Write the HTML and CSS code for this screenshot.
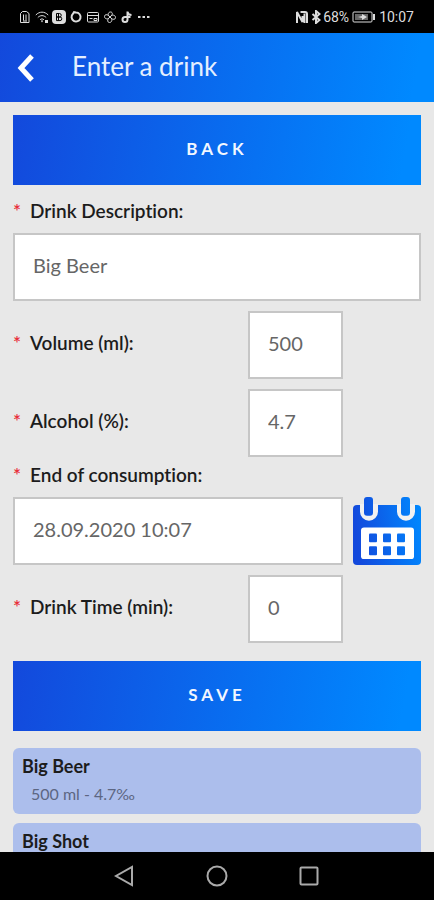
FILE: index.html
```html
<!DOCTYPE html>
<html lang="en">
<head>
<meta charset="utf-8">
<meta name="viewport" content="width=device-width, initial-scale=1">
<title>Enter a drink</title>
<link rel="stylesheet" href="styles.css">
</head>
<body>
<div class="status">
  <div class="status-group">
    <svg class="glyph" viewBox="0 0 14 14"><path d="M2.500 12.500V3.500L4.500 1.500h4l2.500 2v9zM5.500 4.500v6M8 4.500v6M5 11h4"/></svg>
    <svg class="glyph" viewBox="0 0 14 14"><path d="M.8 5C4.500 1.200 9.500 1.200 13.200 5M2.800 7.500c2.500-2.500 5.900-2.500 8.400 0M5 9.800c1.200-1.200 2.800-1.200 4 0"/><path class="solid" d="M6 11l1-1 1 1-1 1.500zM10 10h3v3h-3z"/></svg>
    <svg class="glyph" viewBox="0 0 14 14"><rect class="solid" width="14" height="14" rx="4"/><path class="dark" d="M4.500 3.500h3a1.700 1.700 0 0 1 0 3.500h-3zM4.500 7h3.500a1.800 1.800 0 0 1 0 3.600H4.500zM6.500 3.500v7"/></svg>
    <svg class="glyph" viewBox="0 0 14 14"><path class="thick" d="M7 2.500a4.500 4.500 0 1 1-3 1.200L5 2.200z"/></svg>
    <svg class="glyph" viewBox="0 0 14 14"><rect x="1.500" y="2.500" width="11" height="9.500" rx="1"/><path d="M2 5.500h10M8 8.500h3v2H8zM3.500 8.500h3"/></svg>
    <svg class="glyph" viewBox="0 0 14 14"><path d="M7 7C4 5.500 5 2 7.500 2S10 5 7 7c2-3 5.500-2 5.500.5S9 10 7 7c3 2 2 5.500-.5 5.500S4 9 7 7c-2 3-5.500 2-5.500-.5S5 4 7 7z"/></svg>
    <svg class="glyph" viewBox="0 0 14 14"><path class="thick" d="M7.500 1.500v8a2.500 2.500 0 1 1-2.500-2.500h5.500M7.500 2c.5 2 2 3 4 3"/></svg>
    <svg class="glyph" viewBox="0 0 14 14"><path class="solid" d="M1 6h2.500v2H1zM5.500 6H8v2H5.500zM10 6h2.500v2H10z"/></svg>
  </div>
  <div class="status-group right">
    <svg class="glyph" viewBox="0 0 14 14"><path class="bold" d="M2 13V2l5.500 10V6M5.500 2H10a2 2 0 0 1 2 2v9M9.500 3.500V13"/></svg>
    <svg class="bluetooth" viewBox="0 0 10 14"><path d="M1.500 4l7 6L5 13V1l3.500 3-7 6"/></svg>
    <span>68%</span>
    <svg class="battery" viewBox="0 0 24 12"><rect x="1" y="1" width="19" height="10" rx="1"/><rect class="charge" x="3" y="3" width="13" height="6"/><path class="solid" d="M6 6l4-1V3l5 3-5 3V7zM21 3h2v6h-2z"/></svg>
    <span>10:07</span>
  </div>
</div>
<header class="header">
  <button class="back-arrow" type="button" aria-label="Back"><svg viewBox="0 0 18 28"><path d="M15 2L4 14l11 12"/></svg></button>
  <h1>Enter a drink</h1>
</header>
<main class="content">
  <button class="action" type="button">BACK</button>
  <form class="form">
    <label class="wide" for="description"><span class="star">*</span>Drink Description:</label>
    <input class="wide" id="description" type="text" value="Big Beer">
    <label for="volume"><span class="star">*</span>Volume (ml):</label>
    <input class="short" id="volume" type="text" value="500">
    <label for="alcohol"><span class="star">*</span>Alcohol (%):</label>
    <input class="short" id="alcohol" type="text" value="4.7">
    <label class="wide" for="end"><span class="star">*</span>End of consumption:</label>
    <input class="date" id="end" type="text" value="28.09.2020 10:07">
    <button class="calendar" type="button" aria-label="Pick a date">
      <svg viewBox="0 0 68 69" preserveAspectRatio="none">
        <defs><linearGradient id="blue" gradientUnits="userSpaceOnUse" x1="0" y1="20" x2="68" y2="10"><stop offset="0" stop-color="#1349dc"/><stop offset="1" stop-color="#0089ff"/></linearGradient></defs>
        <rect fill="url(#blue)" x="0" y="8" width="68" height="61" rx="4"/>
        <path fill="#f1f1f1" d="M7 7h18v8a9 9 0 0 1-18 0zM44 7h18v8a9 9 0 0 1-18 0z"/>
        <rect fill="url(#blue)" x="11" y="0" width="9" height="19" rx="3"/>
        <rect fill="url(#blue)" x="48" y="0" width="9" height="19" rx="3"/>
        <rect fill="#fff" x="8" y="31" width="53" height="32" rx="3"/>
        <g fill="url(#blue)"><rect x="16" y="37" width="8" height="9" rx="1"/><rect x="30" y="37" width="8" height="9" rx="1"/><rect x="44" y="37" width="8" height="9" rx="1"/><rect x="16" y="50" width="8" height="9" rx="1"/><rect x="30" y="50" width="8" height="9" rx="1"/><rect x="44" y="50" width="8" height="9" rx="1"/></g>
      </svg>
    </button>
    <label for="time"><span class="star">*</span>Drink Time (min):</label>
    <input class="short" id="time" type="text" value="0">
  </form>
  <button class="action" type="button">SAVE</button>
  <ul class="drinks">
    <li><h2>Big Beer</h2><p>500 ml - 4.7‰</p></li>
    <li><h2>Big Shot</h2></li>
  </ul>
</main>
<nav class="nav">
  <button type="button" aria-label="Back"><svg viewBox="0 0 22 22"><path d="M18 2v18L2 11z"/></svg></button>
  <button type="button" aria-label="Home"><svg viewBox="0 0 22 22"><circle cx="11" cy="11" r="9.500"/></svg></button>
  <button type="button" aria-label="Recent apps"><svg viewBox="0 0 22 22"><rect x="2.500" y="2.500" width="17" height="17" rx="1"/></svg></button>
</nav>
</body>
</html>
```
FILE: styles.css
```css
* {
  box-sizing: border-box;
}

body {
  margin: 0;
  height: 100vh;
  display: flex;
  flex-direction: column;
  background: #e8e8e8;
  color: #1c1c1c;
  font-family: Lato, sans-serif;
  font-variant-ligatures: none;
}

button {
  border: 0;
  padding: 0;
  background: none;
  font-family: inherit;
}

svg {
  display: block;
  fill: none;
}

.status {
  flex: none;
  height: 33px;
  padding: 0 20px 0 18px;
  display: flex;
  align-items: center;
  justify-content: space-between;
  background: #000;
  color: #ddd;
  font: 14px Roboto, sans-serif;
}

.status-group {
  display: flex;
  align-items: center;
  gap: 3px;
}

.right {
  gap: 2px;
}

.status svg {
  stroke: #ddd;
}

.glyph {
  width: 14px;
  height: 14px;
}

.status .solid {
  fill: #ddd;
  stroke: none;
}

.status .dark {
  stroke: #000;
}

.thick,
.bold {
  stroke-width: 2;
}

.bluetooth {
  width: 10px;
  height: 14px;
  stroke-width: 2;
}

.battery {
  width: 24px;
  height: 12px;
  margin: 0 1px;
}

.charge {
  fill: #666;
  stroke: none;
}

.header {
  flex: none;
  height: 69px;
  padding: 0 17px;
  display: flex;
  align-items: center;
  gap: 37px;
  background: linear-gradient(100deg, #1349dc, #0089ff 95%);
}

.back-arrow svg {
  width: 18px;
  height: 28px;
  stroke: #fff;
  stroke-width: 5;
}

h1 {
  margin: 0;
  padding-bottom: 4px;
  color: #e4efff;
  font-size: 26px;
  font-weight: 400;
  line-height: 32px;
}

.content {
  flex: 1;
  min-height: 0;
  overflow: hidden;
  padding: 13px 13px 0;
}

.action {
  display: block;
  width: 100%;
  height: 70px;
  padding-bottom: 4px;
  background: linear-gradient(100deg, #1349dc, #0089ff 95%);
  color: #f2f7ff;
  font-size: 17px;
  font-weight: 700;
  letter-spacing: 4px;
}

.form {
  margin: 18px 0;
  display: grid;
  grid-template-columns: 1fr 95px 68px;
  gap: 10px;
  align-items: center;
}

label {
  grid-column: 1;
  padding-bottom: 4px;
  font-size: 19px;
  font-weight: 600;
  line-height: 20px;
}

.star {
  display: inline-block;
  width: 17px;
  color: #e8303a;
}

.wide {
  grid-column: 1 / -1;
}

label.wide {
  margin: -2px 0;
}

.short {
  grid-column: 2;
}

.date {
  grid-column: 1 / 3;
}

input {
  width: 100%;
  height: 68px;
  padding: 0 18px 4px;
  border: 2px solid #c6c6c6;
  border-radius: 0;
  background: #fff;
  color: #666;
  font: 20px Lato, sans-serif;
}

.calendar svg {
  width: 100%;
  height: 68px;
}

.drinks {
  margin: 17px 0 0;
  padding: 0;
  list-style: none;
  display: grid;
  gap: 9px;
}

.drinks li {
  height: 66px;
  padding: 6px 9px;
  border-radius: 6px;
  background: #acbeec;
}

h2 {
  margin: 0;
  font-size: 18px;
  font-weight: 700;
  line-height: 24px;
}

p {
  margin: 4px 9px;
  color: #5c6682;
  font-size: 16px;
  line-height: 24px;
}

.nav {
  flex: none;
  height: 48px;
  display: flex;
  align-items: center;
  justify-content: center;
  gap: 70px;
  background: #000;
}

.nav svg {
  width: 22px;
  height: 22px;
  stroke: #aaa;
  stroke-width: 2;
}
```
